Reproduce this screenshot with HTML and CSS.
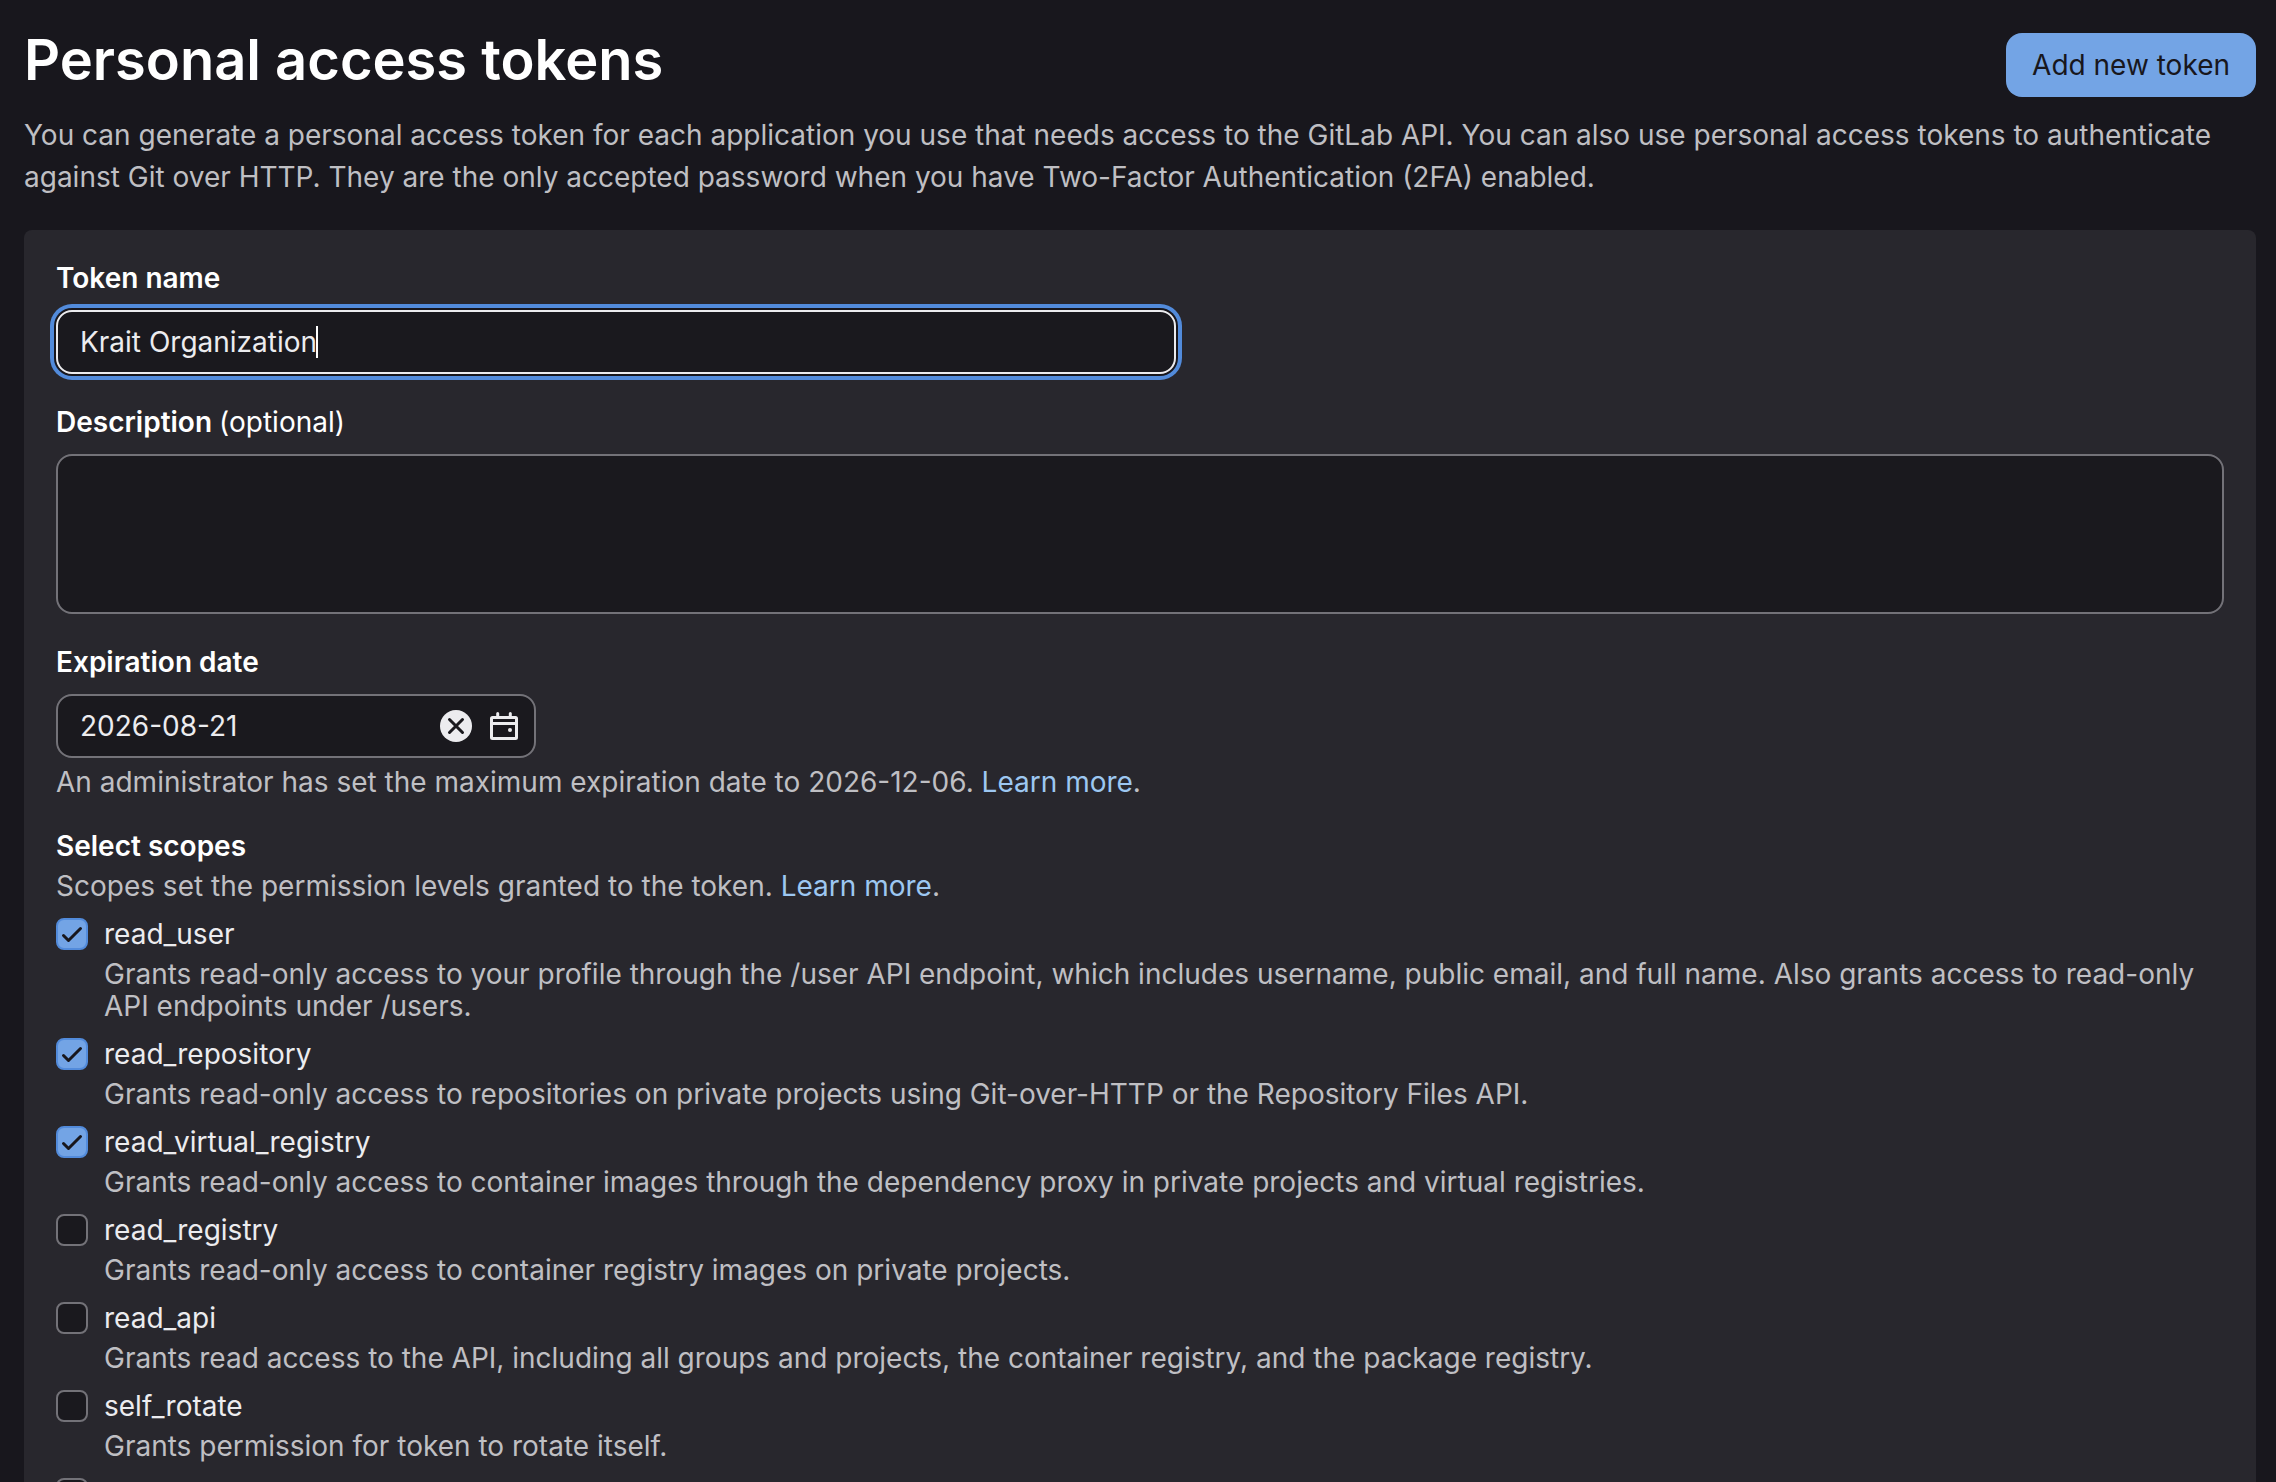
FILE: index.html
```html
<!DOCTYPE html>
<html lang="en">
<head>
    <meta charset="UTF-8">
    <meta name="viewport" content="width=device-width, initial-scale=1.0">
    <title>Personal access tokens</title>
    <link rel="stylesheet" href="styles.css">
</head>
<body>
    <main class="page">
        <header class="page-header">
            <h1>Personal access tokens</h1>
            <button type="button" class="btn-confirm">Add new token</button>
        </header>
        <p class="intro">You can generate a personal access token for each application you use that needs access to the GitLab API. You can also use personal access tokens to authenticate against Git over HTTP. They are the only accepted password when you have Two-Factor Authentication (2FA) enabled.</p>

        <form class="card">
            <div class="form-group">
                <label class="label" for="name">Token name</label>
                <div class="field field-name">
                    <input class="form-input focused" type="text" id="name" value="Krait Organization" autocomplete="off" spellcheck="false">
                    <span class="caret"></span>
                </div>
            </div>

            <div class="form-group">
                <label class="label" for="description">Description <span class="optional">(optional)</span></label>
                <textarea class="form-input" id="description"></textarea>
            </div>

            <div class="form-group">
                <label class="label" for="expires">Expiration date</label>
                <div class="field field-date">
                    <input class="form-input" type="text" id="expires" value="2026-08-21" autocomplete="off">
                    <div class="field-icons">
                        <button type="button" aria-label="Clear date">
                            <svg viewBox="0 0 32 32"><circle cx="16" cy="16" r="16" fill="#ececef"/><path d="M9.5 9.5l13 13M22.5 9.5l-13 13" stroke="#1a191e" stroke-width="3" stroke-linecap="round"/></svg>
                        </button>
                        <button type="button" aria-label="Open calendar">
                            <svg viewBox="0 0 32 32" fill="none" stroke="#ececef" stroke-width="3"><rect x="3.5" y="7.5" width="25" height="21" rx="1"/><path d="M3 13.5h26"/><path d="M9.7 7V3.5M22.3 7V3.5" stroke-linecap="round"/><circle cx="22" cy="20" r="2" fill="#ececef" stroke="none"/></svg>
                        </button>
                    </div>
                </div>
                <p class="help">An administrator has set the maximum expiration date to 2026-12-06. <a href="#">Learn more</a>.</p>
            </div>

            <fieldset class="scopes">
                <legend class="label">Select scopes</legend>
                <p class="help">Scopes set the permission levels granted to the token. <a href="#">Learn more</a>.</p>

                <div class="scope">
                    <input type="checkbox" id="read_user" checked>
                    <label for="read_user">read_user</label>
                    <p class="help">Grants read-only access to your profile through the /user API endpoint, which includes username, public email, and full name. Also grants access to read-only API endpoints under /users.</p>
                </div>
                <div class="scope">
                    <input type="checkbox" id="read_repository" checked>
                    <label for="read_repository">read_repository</label>
                    <p class="help">Grants read-only access to repositories on private projects using Git-over-HTTP or the Repository Files API.</p>
                </div>
                <div class="scope">
                    <input type="checkbox" id="read_virtual_registry" checked>
                    <label for="read_virtual_registry">read_virtual_registry</label>
                    <p class="help">Grants read-only access to container images through the dependency proxy in private projects and virtual registries.</p>
                </div>
                <div class="scope">
                    <input type="checkbox" id="read_registry">
                    <label for="read_registry">read_registry</label>
                    <p class="help">Grants read-only access to container registry images on private projects.</p>
                </div>
                <div class="scope">
                    <input type="checkbox" id="read_api">
                    <label for="read_api">read_api</label>
                    <p class="help">Grants read access to the API, including all groups and projects, the container registry, and the package registry.</p>
                </div>
                <div class="scope">
                    <input type="checkbox" id="self_rotate">
                    <label for="self_rotate">self_rotate</label>
                    <p class="help">Grants permission for token to rotate itself.</p>
                </div>
                <div class="scope">
                    <input type="checkbox" id="more" aria-label="Next scope">
                </div>
            </fieldset>
        </form>
    </main>
</body>
</html>
```
FILE: styles.css
```css
:root{
    --bg-color: #18171d;
    --card-color: #28272d;
    --input-color: #1a191e;
    --border-color: #737278;
    --text-color: #ececef;
    --muted-color: #bfbfc3;
    --link-color: #9dc7f1;
    --blue: #73a4e5;
    --blue-dark: #528bdb;
}
*{
    box-sizing: border-box;
}
html{
    background-color: var(--bg-color);
}
body{
    margin: 0;
    height: 100vh;
    overflow: hidden;
    color: var(--text-color);
    font-family: Inter, "Liberation Sans", sans-serif;
    font-size: 28px;
    line-height: 32px;
}
h1, p{
    margin: 0;
}
a{
    color: var(--link-color);
    text-decoration: none;
}
input, textarea, button{
    font: inherit;
    color: inherit;
}
.page{
    padding: 23px 20px 0 24px;
}
.page-header{
    display: flex;
    justify-content: space-between;
    align-items: flex-end;
    margin-bottom: 17px;
}
h1{
    color: #fff;
    font-size: 56px;
    font-weight: 600;
    line-height: 74px;
}
.btn-confirm{
    height: 64px;
    padding: 0 26px;
    border: 0;
    border-radius: 16px;
    background-color: var(--blue);
    color: var(--bg-color);
}
.intro{
    color: var(--muted-color);
    line-height: 42px;
}
.card{
    margin-top: 32px;
    padding: 32px;
    border-radius: 8px 8px 0 0;
    background-color: var(--card-color);
}
.form-group{
    margin-bottom: 32px;
}
.label{
    display: block;
    padding: 0;
    color: #fff;
    font-weight: 600;
}
.form-group .label{
    margin-bottom: 16px;
}
.optional{
    font-weight: 400;
}
.form-input{
    display: block;
    width: 100%;
    height: 64px;
    padding: 0 22px;
    border: 2px solid var(--border-color);
    border-radius: 16px;
    outline: 0;
    background-color: var(--input-color);
}
textarea.form-input{
    height: 160px;
    padding: 14px 22px;
    resize: none;
}
.form-input.focused{
    border-color: var(--text-color);
    box-shadow: 0 0 0 2px var(--bg-color), 0 0 0 6px var(--blue-dark);
}
.field{
    position: relative;
    max-width: 100%;
}
.field-name{
    width: 1120px;
}
.field-date{
    width: 480px;
}
/* text cursor after the token name */
.caret{
    position: absolute;
    top: 16px;
    left: 260px;
    width: 2px;
    height: 32px;
    background-color: #fff;
}
.field-icons{
    position: absolute;
    top: 16px;
    right: 16px;
    display: flex;
    gap: 16px;
}
.field-icons button{
    width: 32px;
    height: 32px;
    padding: 0;
    border: 0;
    background: none;
}
.field-icons svg{
    display: block;
}
.help{
    margin-top: 8px;
    color: var(--muted-color);
}
.scopes{
    margin: 0;
    padding: 0;
    border: 0;
}
.scope{
    display: grid;
    grid-template-columns: 32px 1fr;
    column-gap: 16px;
    margin-top: 16px;
}
.scope .help{
    grid-column: 2;
}
.scope input{
    appearance: none;
    width: 32px;
    height: 32px;
    margin: 0;
    border: 2px solid var(--border-color);
    border-radius: 8px;
    background-color: var(--input-color);
}
.scope input:checked{
    border-color: var(--blue-dark);
    background: var(--blue) url("data:image/svg+xml,%3Csvg xmlns='http://www.w3.org/2000/svg' viewBox='0 0 28 28'%3E%3Cpath d='M5.5 15.5l5 5L22.5 8.5' fill='none' stroke='%2318171d' stroke-width='3' stroke-linecap='round' stroke-linejoin='round'/%3E%3C/svg%3E") center / 28px no-repeat;
}
```
